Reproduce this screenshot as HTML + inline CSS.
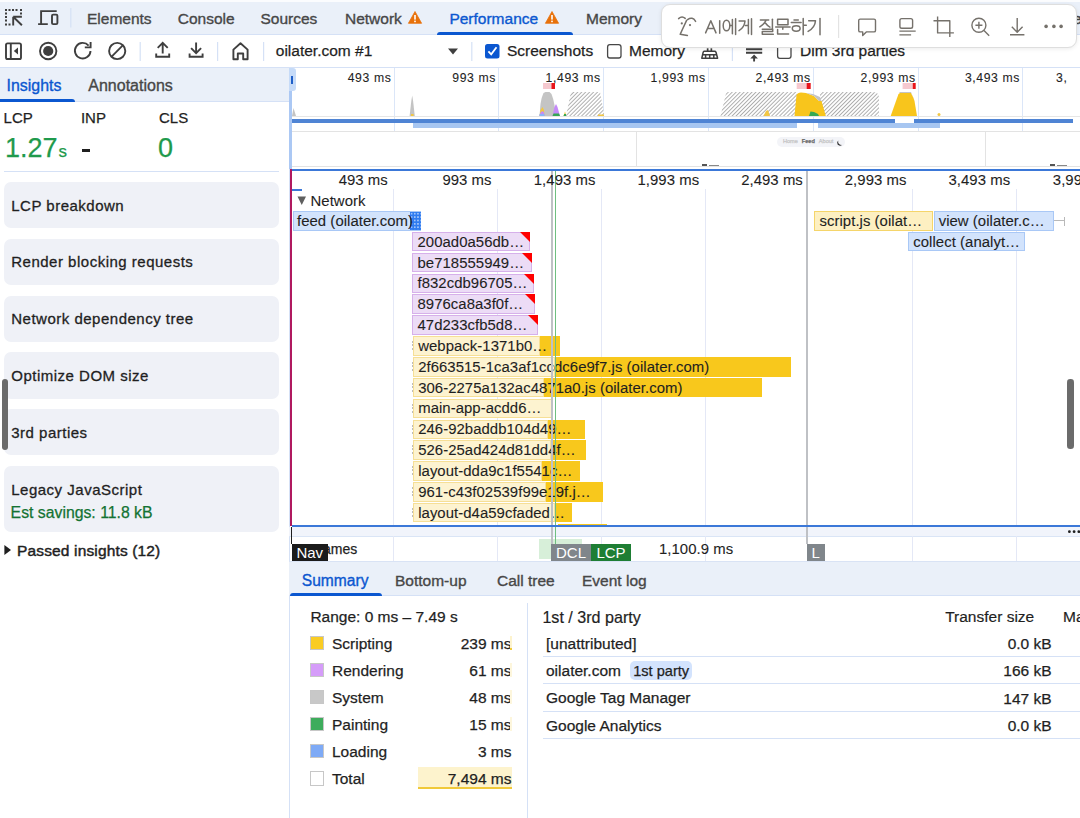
<!DOCTYPE html>
<html><head><meta charset="utf-8">
<style>
*{box-sizing:border-box}
html,body{margin:0;padding:0}
body{width:1080px;height:818px;overflow:hidden;position:relative;background:#fff;font-family:"Liberation Sans",sans-serif;color:#1f1f1f}
.a{position:absolute}
.t{position:absolute;white-space:nowrap;line-height:1;-webkit-text-stroke-width:0.25px}
svg{position:absolute;overflow:visible}
.card{left:4px;width:274.5px;border-radius:7px;background:#eff1f7;}
.ct{left:11.25px;font-size:15px;letter-spacing:0.5px;color:#1f1f1f;-webkit-text-stroke:0.3px #1f1f1f}
.ovl{top:71.9px;font-size:12.2px;letter-spacing:0.62px;color:#1f1f1f;-webkit-text-stroke-width:0.1px}
.fcl{top:172.7px;font-size:14.9px;letter-spacing:0.05px;color:#1f1f1f;-webkit-text-stroke-width:0.1px}
.fct{font-size:14.9px;letter-spacing:0.05px;color:#1f1f1f;-webkit-text-stroke-width:0.1px}
.bb{background:#d2e3fc;border:1px solid #a9c8f6}
.pb{background:#ecdcf6;border:1px solid #d6b0ea}
.yb{background:#fdf3d0;border:1px solid #f6df96}
.yb2{background:#fdf0c2;border:1px solid #f5d56a}
.yd{background:#f8c81c}
.mk{top:543.8px;height:17px;color:#fff;font-size:15px;line-height:18px;text-align:center}
.sm{font-size:15.5px;color:#1f1f1f}
.sw{left:309.7px;width:14.6px;height:14.6px;border:1px solid #c7c7c7}
.sr{left:312px;width:199.5px;text-align:right}
.tr{left:851.6px;width:200px;text-align:right}
.rl{left:543px;width:537px;height:1.2px;background:#d5e1f6}
</style></head><body>

<!-- ============ TOP TAB BAR ============ -->
<div class="a" style="left:0;top:0;width:1080px;height:35px;background:#eaf0f9;border-bottom:1px solid #d5e1f6"></div>
<div class="a" style="left:0;top:0;width:1080px;height:2px;background:#fbfcfe"></div>
<!-- inspect icon -->
<svg style="left:0;top:0" width="80" height="35">
  <g fill="#3f3f3f">
    <rect x="5" y="9" width="2" height="2"/><rect x="8.5" y="9" width="2" height="2"/><rect x="12" y="9" width="2" height="2"/><rect x="15.5" y="9" width="2" height="2"/><rect x="20" y="9" width="2" height="2"/>
    <rect x="5" y="12.5" width="2" height="2"/><rect x="5" y="16" width="2" height="2"/><rect x="5" y="19.5" width="2" height="2"/><rect x="5" y="23.5" width="2" height="2"/>
    <rect x="8.5" y="23.5" width="2" height="2"/><rect x="20" y="12.5" width="2" height="2"/>
  </g>
  <path d="M21.9 25.3 L13.2 16.8 M13.2 16.8 H21.9 M13.2 16.8 V25.5" stroke="#3f3f3f" stroke-width="1.9" fill="none"/>
  <path d="M41.1 24.1 V11.1 H56.7 M38.1 24.1 H47.8" stroke="#3f3f3f" stroke-width="1.9" fill="none"/>
  <rect x="52" y="14.6" width="5.4" height="9.5" rx="1.2" stroke="#3f3f3f" stroke-width="1.9" fill="none"/>
  <rect x="70.2" y="8" width="1.2" height="19.5" fill="#d5e1f6"/>
</svg>
<div class="t" style="left:87px;top:11.3px;font-size:15.5px;color:#474747;-webkit-text-stroke-width:0.35px">Elements</div>
<div class="t" style="left:177.8px;top:11.3px;font-size:15.5px;color:#474747;-webkit-text-stroke-width:0.35px">Console</div>
<div class="t" style="left:260.5px;top:11.3px;font-size:15.5px;color:#474747;-webkit-text-stroke-width:0.35px">Sources</div>
<div class="t" style="left:345px;top:11.3px;font-size:15.5px;color:#474747;-webkit-text-stroke-width:0.35px">Network</div>
<svg style="left:408px;top:11px" width="14" height="13"><path d="M7 0.5 L13.6 12.3 H0.4 Z" fill="#e8710a" stroke="#e8710a" stroke-width="0.8" stroke-linejoin="round"/><rect x="6.2" y="4" width="1.6" height="4.6" fill="#fff"/><rect x="6.2" y="9.6" width="1.6" height="1.6" fill="#fff"/></svg>
<div class="t" style="left:449.4px;top:11.3px;font-size:15.5px;color:#0b57d0;-webkit-text-stroke-width:0.35px">Performance</div>
<svg style="left:545px;top:11px" width="14" height="13"><path d="M7 0.5 L13.6 12.3 H0.4 Z" fill="#e8710a" stroke="#e8710a" stroke-width="0.8" stroke-linejoin="round"/><rect x="6.2" y="4" width="1.6" height="4.6" fill="#fff"/><rect x="6.2" y="9.6" width="1.6" height="1.6" fill="#fff"/></svg>
<div class="a" style="left:437px;top:32px;width:136px;height:3px;background:#0b57d0;border-radius:3px 3px 0 0"></div>
<div class="t" style="left:586px;top:11.3px;font-size:15.5px;color:#474747;-webkit-text-stroke-width:0.35px">Memory</div>
<div class="t" style="left:1073px;top:11.3px;font-size:15.5px;color:#474747;-webkit-text-stroke-width:0.35px">e</div>

<!-- ============ TOOLBAR ============ -->
<div class="a" style="left:0;top:35px;width:1080px;height:33px;background:#fff;border-bottom:1px solid #d5e1f6"></div>
<svg style="left:0;top:35px" width="1080" height="33">
  <g stroke="#3f3f3f" stroke-width="1.9" fill="none">
    <rect x="6" y="8.4" width="15" height="15.6" rx="1.6"/>
    <path d="M10.8 8.4 V24"/>
  </g>
  <path d="M18 12.6 V19.6 L13.8 16.1 Z" fill="#3f3f3f"/>
  <circle cx="48.2" cy="16" r="8.2" stroke="#3f3f3f" stroke-width="1.9" fill="none"/>
  <circle cx="48.2" cy="16" r="5.1" fill="#3f3f3f"/>
  <path d="M90.5 16 A7.8 7.8 0 1 1 88.6 10.6" stroke="#3f3f3f" stroke-width="1.9" fill="none"/>
  <path d="M84.8 12.4 H90.6 V7" stroke="#3f3f3f" stroke-width="1.9" fill="none"/>
  <circle cx="117.2" cy="16" r="8.1" stroke="#3f3f3f" stroke-width="1.9" fill="none"/>
  <path d="M111.4 21.8 L123 10.2" stroke="#3f3f3f" stroke-width="1.9"/>
  <rect x="139.6" y="7" width="1.2" height="19" fill="#d5e1f6"/>
  <path d="M162.7 18.5 V8 M157.7 12.8 L162.7 7.8 L167.7 12.8 M156.2 18.6 V21.8 H169.2 V18.6" stroke="#3f3f3f" stroke-width="1.9" fill="none"/>
  <path d="M196.1 7.5 V18 M191.1 13.2 L196.1 18.2 L201.1 13.2 M189.6 18.6 V21.8 H202.6 V18.6" stroke="#3f3f3f" stroke-width="1.9" fill="none"/>
  <rect x="217" y="7" width="1.2" height="19" fill="#d5e1f6"/>
  <path d="M233.4 24.2 V14.6 L240.5 8.2 L247.6 14.6 V24.2 H243.2 V18.5 H237.8 V24.2 Z" stroke="#3f3f3f" stroke-width="1.9" fill="none" stroke-linejoin="round"/>
  <rect x="263" y="7" width="1.2" height="19" fill="#d5e1f6"/>
  <path d="M448 13.5 H458 L453 19.5 Z" fill="#3f3f3f"/>
  <rect x="471.2" y="7" width="1.2" height="19" fill="#d5e1f6"/>
  <rect x="485" y="9" width="14.5" height="14.5" rx="2.5" fill="#0b57d0"/>
  <path d="M488.4 16.3 L491.2 19.3 L496.5 12.2" stroke="#fff" stroke-width="1.8" fill="none"/>
  <rect x="607.6" y="9.6" width="13.4" height="13.4" rx="2.3" stroke="#474747" stroke-width="1.3" fill="#fff"/>
  <rect x="731.8" y="7" width="1.2" height="19" fill="#d5e1f6"/>
  <rect x="777.6" y="10" width="13.4" height="13.4" rx="2.3" stroke="#474747" stroke-width="1.3" fill="#fff"/>
</svg>
<div class="t" style="left:275.8px;top:42.6px;font-size:15.5px;color:#1f1f1f">oilater.com #1</div>
<div class="t" style="left:507px;top:43px;font-size:15.5px;color:#1f1f1f">Screenshots</div>
<div class="t" style="left:629px;top:43px;font-size:15.5px;color:#1f1f1f">Memory</div>
<div class="t" style="left:800px;top:43px;font-size:15.5px;color:#1f1f1f">Dim 3rd parties</div>


<!-- toolbar items under popup -->
<svg style="left:0;top:0" width="1080" height="68">
  <g stroke="#3f3f3f" stroke-width="1.5" fill="none" stroke-linejoin="round">
    <path d="M704 51.2 H714.6 Q715.6 51.2 716 52.2 L717.6 58.2 H701.8 L703.2 52.2 Q703.5 51.2 704 51.2 Z"/>
    <path d="M702.8 54.8 H716.6 M705.6 54.8 V58.2 M709.7 54.8 V58.2 M713.8 54.8 V58.2"/>
  </g>
  <rect x="706.8" y="48.3" width="1.7" height="3" fill="#3f3f3f"/><rect x="710.5" y="48.3" width="1.7" height="3" fill="#3f3f3f"/>
  <path d="M746 49.3 H762.2 M746 52.8 H762.2" stroke="#3f3f3f" stroke-width="1.9"/>
  <path d="M754.1 61.5 V56.5" stroke="#3f3f3f" stroke-width="1.9"/>
  <path d="M750.3 58.6 L754.1 54.6 L757.9 58.6 Z" fill="#3f3f3f"/>
</svg>

<!-- ============ AI POPUP ============ -->
<div class="a" style="left:661px;top:4.3px;width:415.7px;height:43.9px;background:#fff;border-radius:9px;border:1px solid #dedede;box-shadow:0 1px 4px rgba(0,0,0,0.08)"></div>
<svg style="left:0;top:0" width="1080" height="60">
  <g stroke="#75716b" stroke-width="1.5" fill="none" stroke-linecap="round" stroke-linejoin="round">
    <!-- AI face icon -->
    <path d="M678.6 18.6 Q682 15.4 685.2 18.4"/>
    <path d="M687.6 19.6 Q692.5 16.2 695.6 21.4"/>
    <path d="M686.6 20.4 L680.2 34.2 L687.4 35.4"/>
    <!-- A I -->
    <path d="M705.6 32.9 L710.8 20.8 L716 32.9 M707.5 28.6 H714.1"/>
    <path d="M719.7 20.7 V33.3"/>
    <!-- 에 -->
    <ellipse cx="726.5" cy="25.5" rx="3.3" ry="5.3"/>
    <path d="M729.9 25.5 H732.4 M732.4 19.4 V33.8 M735.6 18.8 V34.6"/>
    <!-- 게 -->
    <path d="M739.1 21 H745 Q744.4 27.5 739 30.7"/>
    <path d="M745.2 25.5 H748.4 M748.4 19.4 V33.8 M751.5 18.8 V34.6"/>
    <!-- 질 -->
    <path d="M760.4 20.1 H768.7 M766 20.4 Q764 24.5 759.8 26.8 M765.6 23.2 Q767.5 25.8 769.9 27.1"/>
    <path d="M772.4 19.2 V28.7"/>
    <path d="M762.3 29.3 H772.7 V31.4 H762.3 V34.2 H773.3"/>
    <!-- 문 -->
    <rect x="777.6" y="19.2" width="10.4" height="5.5"/>
    <path d="M775.7 27.1 H790.1 M782.8 27.1 V29.3 M777.6 29.6 V33.9 H788.6"/>
    <!-- 하 -->
    <path d="M794 20.1 H798.3 M791.3 22.6 H801.1"/>
    <ellipse cx="796.2" cy="28.5" rx="3.9" ry="2.7"/>
    <path d="M803.2 18.6 V34.8 M803.2 25.3 H806.3"/>
    <!-- 기 -->
    <path d="M808.7 20.7 H815.5 Q815 27.5 808.1 31.4"/>
    <path d="M820 18.6 V34.8"/>
  </g>
  <g fill="#75716b">
    <circle cx="681.8" cy="23.4" r="1.1"/>
    <circle cx="690" cy="25.1" r="1.1"/>
  </g>
  <rect x="838" y="15" width="1.2" height="23" fill="#e3e3e3"/>
  <g stroke="#75716b" stroke-width="1.4" fill="none" stroke-linejoin="round">
    <path d="M860.2 19.1 H874 Q875.5 19.1 875.5 20.6 V30.4 Q875.5 31.9 874 31.9 H866.3 L862.7 35.4 V31.9 H860.2 Q858.7 31.9 858.7 30.4 V20.6 Q858.7 19.1 860.2 19.1 Z"/>
    <rect x="899.9" y="18.6" width="12.7" height="9.7" rx="1.8"/>
    <path d="M899.4 31.1 H915.7 M899.4 34.9 H911.1"/>
    <path d="M937.6 16.6 V32.9 H953.9 M933.5 20.7 H949.8 V37"/>
    <circle cx="978.9" cy="25.3" r="7"/>
    <path d="M975.4 25.3 H982.4 M978.9 21.8 V28.8 M984 30.6 L989.2 35.8"/>
    <path d="M1017.2 18.1 V31.8 M1011.8 26.8 L1017.2 32.2 L1022.6 26.8 M1010 34.8 H1024.4"/>
  </g>
  <g fill="#75716b">
    <circle cx="1046.1" cy="26.4" r="1.8"/><circle cx="1053.9" cy="26.4" r="1.8"/><circle cx="1061.1" cy="26.4" r="1.8"/>
  </g>
</svg>

<!-- ============ LEFT SIDEBAR ============ -->
<div class="a" style="left:0;top:68px;width:289px;height:34px;background:#eaf0f9;border-bottom:1px solid #d5e1f6"></div>
<div class="t" style="left:6.6px;top:77.6px;font-size:15.9px;color:#0b57d0;-webkit-text-stroke-width:0.35px">Insights</div>
<div class="t" style="left:88.3px;top:77.6px;font-size:16px;color:#474747;-webkit-text-stroke-width:0.35px">Annotations</div>
<div class="a" style="left:0;top:98.8px;width:75px;height:2.8px;background:#0b57d0;border-radius:0 3px 0 0"></div>
<div class="a" style="left:288.5px;top:68px;width:1px;height:750px;background:#d5e1f6"></div>


<div class="t" style="left:3.6px;top:110.2px;font-size:15px;color:#1f1f1f">LCP</div>
<div class="t" style="left:80.9px;top:110.2px;font-size:15px;color:#1f1f1f">INP</div>
<div class="t" style="left:159px;top:110.2px;font-size:15px;color:#1f1f1f">CLS</div>
<div class="t" style="left:5px;top:135px;font-size:27px;color:#1f9a4c">1.27<span style="font-size:17px;margin-left:1px">s</span></div>
<div class="a" style="left:82px;top:149px;width:8px;height:2.5px;background:#1f1f1f"></div>
<div class="t" style="left:158px;top:135px;font-size:27px;color:#1f9a4c">0</div>
<div class="a" style="left:4px;top:170.5px;width:274.5px;height:1px;background:#d5e1f6"></div>

<div class="a card" style="top:181.7px;height:46.5px"></div>
<div class="t ct" style="top:197.6px">LCP breakdown</div>
<div class="a card" style="top:238.5px;height:46.5px"></div>
<div class="t ct" style="top:254.4px">Render blocking requests</div>
<div class="a card" style="top:295.5px;height:46.5px"></div>
<div class="t ct" style="top:311.2px">Network dependency tree</div>
<div class="a card" style="top:352px;height:46.5px"></div>
<div class="t ct" style="top:368px">Optimize DOM size</div>
<div class="a card" style="top:408.7px;height:46.5px"></div>
<div class="t ct" style="top:424.8px">3rd parties</div>
<div class="a card" style="top:465.6px;height:66.5px"></div>
<div class="t ct" style="top:481.5px">Legacy JavaScript</div>
<div class="t" style="left:10.6px;top:504.5px;font-size:15.8px;color:#137333;-webkit-text-stroke:0.25px #137333">Est savings: 11.8 kB</div>
<svg style="left:0;top:540px" width="20" height="20"><path d="M4.4 5 L11 10 L4.4 15 Z" fill="#1f1f1f"/></svg>
<div class="t" style="left:17px;top:543px;font-size:15.5px;letter-spacing:0.15px;color:#1f1f1f;-webkit-text-stroke-width:0.45px">Passed insights (12)</div>
<div class="a" style="left:2.3px;top:379.3px;width:6px;height:70.4px;border-radius:3px;background:#6b6b6b"></div>

<!-- ============ OVERVIEW ============ -->
<div class="a" style="left:393.5px;top:68px;width:1px;height:63px;background:#dbe6f8"></div>
<div class="a" style="left:498.1px;top:68px;width:1px;height:63px;background:#dbe6f8"></div>
<div class="a" style="left:602.8px;top:68px;width:1px;height:63px;background:#dbe6f8"></div>
<div class="a" style="left:707.8px;top:68px;width:1px;height:63px;background:#dbe6f8"></div>
<div class="a" style="left:812.8px;top:68px;width:1px;height:63px;background:#dbe6f8"></div>
<div class="a" style="left:917.8px;top:68px;width:1px;height:63px;background:#dbe6f8"></div>
<div class="a" style="left:1022.1px;top:68px;width:1px;height:63px;background:#dbe6f8"></div>
<div class="t ovl" style="left:95.40px;width:296px;text-align:right">493 ms</div>
<div class="t ovl" style="left:200.00px;width:296px;text-align:right">993 ms</div>
<div class="t ovl" style="left:304.70px;width:296px;text-align:right">1,493 ms</div>
<div class="t ovl" style="left:409.70px;width:296px;text-align:right">1,993 ms</div>
<div class="t ovl" style="left:514.70px;width:296px;text-align:right">2,493 ms</div>
<div class="t ovl" style="left:619.70px;width:296px;text-align:right">2,993 ms</div>
<div class="t ovl" style="left:724.00px;width:296px;text-align:right">3,493 ms</div>
<div class="t ovl" style="left:1056px">3,</div>
<div class="a" style="left:292px;top:115.5px;width:788px;height:1px;background:#e6e6e6"></div>
<div class="a" style="left:292px;top:119px;width:603px;height:4px;background:#4f84d4"></div>
<div class="a" style="left:914px;top:119px;width:159px;height:4px;background:#4f84d4"></div>
<div class="a" style="left:413px;top:123px;width:384px;height:5px;background:#a7c6f1"></div>
<div class="a" style="left:818px;top:123px;width:122px;height:5px;background:#a7c6f1"></div>
<div class="a" style="left:292px;top:131px;width:788px;height:1px;background:#e3e3e3"></div>
<div class="a" style="left:636px;top:131px;width:1.2px;height:36px;background:#e3e3e3"></div>
<div class="a" style="left:985px;top:131px;width:1.2px;height:36px;background:#e3e3e3"></div>
<div class="a" style="left:292px;top:166.3px;width:788px;height:1px;background:#e3e3e3"></div>

<svg style="left:0;top:0" width="1080" height="170">
  <defs>
    <pattern id="hatch" patternUnits="userSpaceOnUse" width="2.8" height="2.8" patternTransform="rotate(-45)">
      <rect width="2.8" height="2.8" fill="#fff"/>
      <rect width="2.8" height="0.95" fill="#adadad"/>
    </pattern>
  </defs>
  <path d="M292 116 L293.5 108 L296 116 Z" fill="#c4c4c4"/>
  <path d="M409.6 116 L411.3 101 L412.2 95.5 L413.1 101 L414.8 116 Z" fill="#c4c4c4"/>
  <rect x="411" y="114" width="2.6" height="2" fill="#f2c744"/>
  <!-- blob 1 -->
  <path d="M539.5 116 L540.5 104 Q541.5 97 543.5 93 L545.5 92 L549.5 92 L551.5 94 Q553.5 99 554.5 105 L556 116 Z" fill="#c4c4c4"/>
  <path d="M539.5 116 L540.5 110 L542.5 107 L544 110 L544.5 116 Z" fill="#f2c744"/>
  <path d="M539.5 116 L540.5 112.5 L542.5 111 L544 112.5 L544.5 116 Z" fill="#c58af9"/>
  <path d="M539.5 116 V114 H544.5 V116 Z" fill="#8ab4f8"/>
  <path d="M552.5 116 L554.5 107 L556 104 L557.5 107 L560 116 Z" fill="#c58af9"/>
  <path d="M552.5 116 L553.5 113.5 H559 L560 116 Z" fill="#34a853"/>
  <path d="M563.5 116 L565 111.5 L566.5 116 Z" fill="#f2c744"/>
  <path d="M563.5 116 L564.2 114 H566 L566.5 116 Z" fill="#34a853"/>
  <path d="M566 116 L571 92 H600 L604.5 116 Z" fill="url(#hatch)"/>
  <rect x="598" y="114.5" width="6" height="1.5" fill="#f2c744"/>
  <rect x="543" y="83" width="12" height="6" fill="#f6c9cf"/>
  <rect x="551.5" y="83" width="3.5" height="6" fill="#e8141b"/>
  <!-- hatched 2 -->
  <path d="M720.5 116 L726 93.5 Q726.5 92 728 92 H797 V116 Z" fill="url(#hatch)"/>
  <path d="M763.5 116 L766 111 L768 110 L770 116 Z" fill="#f2c744"/>
  <path d="M820 116 V92 H873 Q879 92 879 98 V116 Z" fill="url(#hatch)"/>
  <path d="M794.5 116 L796.5 95 Q797.5 92.5 801 92.5 L806 93 L814 96 L819 101 L821.5 101 L825.8 116 Z" fill="#f8c51c"/>
  <path d="M806 93 L814 96 L819 101 L821.5 101 L820 97 L813 94 Z" fill="#c4c4c4"/>
  <path d="M809 116 L810.5 111.5 L814 112 L818 114 L819 116 Z" fill="#34a853"/>
  <rect x="796.7" y="83" width="12" height="6" fill="#f6c9cf"/>
  <rect x="806.7" y="83" width="4" height="6" fill="#e8141b"/>
  <!-- yellow blob 3 -->
  <path d="M890.7 116 L896 101 L898.5 94 L900 93 H911 L913.5 98 L914.5 101 L917 116 Z" fill="#f8c51c"/>
  <path d="M900 93 L899 92 H911 L914.5 101 L913.5 98 L911 93 Z" fill="#c4c4c4"/>
  <rect x="902.6" y="83" width="10" height="6" fill="#f6c9cf"/>
  <rect x="912.7" y="83" width="3" height="6" fill="#e8141b"/>
  <circle cx="939" cy="114.5" r="1.5" fill="#f2c744"/>
</svg>


<div class="a" style="left:777.4px;top:137.1px;width:67.7px;height:9.9px;background:#f3f4f8;border-radius:5px"></div>
<div class="t" style="left:782.9px;top:138.6px;font-size:5.6px;color:#c4c4c4">Home</div>
<div class="t" style="left:801.8px;top:138.6px;font-size:5.6px;color:#6a6a6a;font-weight:bold">Feed</div>
<div class="t" style="left:818.8px;top:138.6px;font-size:5.6px;color:#c4c4c4">About</div>
<svg style="left:836.5px;top:139.5px" width="6" height="6"><path d="M1.2 0.5 Q0.5 4.8 5 5 Q2.5 6.5 0.6 4.5 Q-0.5 2 1.2 0.5 Z" fill="#2a2a2a"/></svg>
<div class="a" style="left:702px;top:164px;width:5px;height:2px;background:#555"></div>
<div class="a" style="left:709px;top:164.6px;width:10px;height:1.6px;background:#888"></div>
<div class="a" style="left:1050px;top:164px;width:5px;height:2px;background:#555"></div>
<div class="a" style="left:1057px;top:164.6px;width:10px;height:1.6px;background:#888"></div>

<!-- left handle -->
<div class="a" style="left:289.3px;top:68px;width:2.8px;height:101px;background:#abc8f4"></div>
<div class="a" style="left:289.3px;top:68px;width:6.4px;height:23px;background:#c6dbf8;border-radius:0 3px 3px 0"></div>
<div class="a" style="left:291px;top:75.7px;width:1.6px;height:8px;background:#1f5fc8"></div>

<!-- ============ FLAME CHART ============ -->
<div class="a" style="left:292px;top:169px;width:788px;height:2px;background:#3b78d8"></div>
<div class="a" style="left:393.25px;top:189px;width:1px;height:337px;background:#e4e8f6"></div>
<div class="a" style="left:497.00px;top:189px;width:1px;height:337px;background:#e4e8f6"></div>
<div class="a" style="left:600.90px;top:189px;width:1px;height:337px;background:#e4e8f6"></div>
<div class="a" style="left:704.60px;top:189px;width:1px;height:337px;background:#e4e8f6"></div>

<div class="a" style="left:911.90px;top:189px;width:1px;height:337px;background:#e4e8f6"></div>
<div class="a" style="left:1015.60px;top:189px;width:1px;height:337px;background:#e4e8f6"></div>
<div class="a" style="left:292px;top:188.8px;width:10px;height:2px;background:#3b78d8"></div>
<svg style="left:297px;top:196px" width="10" height="10"><path d="M0.5 0.5 H9 L4.75 9 Z" fill="#5f5f5f"/></svg>
<div class="t fct" style="left:310.5px;top:193.8px">Network</div>
<div class="a bb" style="left:292.5px;top:211.0px;width:128.5px;height:19.6px"></div>
<div class="a" style="left:410px;top:211.5px;width:11px;height:18.6px;background:#2f7cf0;background-image:radial-gradient(#a9c8fa 0.55px, transparent 0.75px);background-size:3.2px 3.4px"></div>
<div class="t fct" style="left:297.0px;top:213.85px">feed (oilater.com)</div>
<div class="a pb" style="left:412.0px;top:231.8px;width:118.0px;height:19.6px"></div>
<svg style="left:520.0px;top:231.8px" width="10" height="10"><path d="M0 0 H10 V10 Z" fill="#ff0000"/></svg>
<div class="t fct" style="left:417.5px;top:234.65px">200ad0a56db…</div>
<div class="a pb" style="left:412.0px;top:252.7px;width:119.7px;height:19.6px"></div>
<svg style="left:521.7px;top:252.7px" width="10" height="10"><path d="M0 0 H10 V10 Z" fill="#ff0000"/></svg>
<div class="t fct" style="left:417.5px;top:255.55px">be718555949…</div>
<div class="a pb" style="left:412.0px;top:273.6px;width:121.8px;height:19.6px"></div>
<svg style="left:523.8px;top:273.6px" width="10" height="10"><path d="M0 0 H10 V10 Z" fill="#ff0000"/></svg>
<div class="t fct" style="left:417.5px;top:276.45px">f832cdb96705…</div>
<div class="a pb" style="left:412.0px;top:294.4px;width:123.0px;height:19.6px"></div>
<svg style="left:525.0px;top:294.4px" width="10" height="10"><path d="M0 0 H10 V10 Z" fill="#ff0000"/></svg>
<div class="t fct" style="left:417.5px;top:297.25px">8976ca8a3f0f…</div>
<div class="a pb" style="left:412.0px;top:315.2px;width:125.5px;height:19.6px"></div>
<svg style="left:527.5px;top:315.2px" width="10" height="10"><path d="M0 0 H10 V10 Z" fill="#ff0000"/></svg>
<div class="t fct" style="left:417.5px;top:318.15px">47d233cfb5d8…</div>
<div class="a yb" style="left:413.0px;top:336.1px;width:127.4px;height:19.6px"></div>
<div class="a yd" style="left:540.4px;top:336.1px;width:19.8px;height:19.6px"></div>
<div class="t fct" style="left:418.2px;top:338.95px">webpack-1371b0…</div>
<div class="a" style="left:411.8px;top:341.1px;width:1px;height:10px;background:repeating-linear-gradient(#bdbdbd 0 2px,transparent 2px 3.5px)"></div>
<div class="a yb" style="left:413.0px;top:357.0px;width:141.7px;height:19.6px"></div>
<div class="a yd" style="left:554.7px;top:357.0px;width:236.3px;height:19.6px"></div>
<div class="t fct" style="left:418.2px;top:359.85px">2f663515-1ca3af1ccdc6e9f7.js (oilater.com)</div>
<div class="a" style="left:411.8px;top:362.0px;width:1px;height:10px;background:repeating-linear-gradient(#bdbdbd 0 2px,transparent 2px 3.5px)"></div>
<div class="a yb" style="left:413.0px;top:377.8px;width:131.0px;height:19.6px"></div>
<div class="a yd" style="left:544.0px;top:377.8px;width:217.5px;height:19.6px"></div>
<div class="t fct" style="left:418.2px;top:380.65px">306-2275a132ac4871a0.js (oilater.com)</div>
<div class="a" style="left:411.8px;top:382.8px;width:1px;height:10px;background:repeating-linear-gradient(#bdbdbd 0 2px,transparent 2px 3.5px)"></div>
<div class="a yb" style="left:413.0px;top:398.6px;width:138.6px;height:19.6px"></div>
<div class="t fct" style="left:418.2px;top:401.45px">main-app-acdd6…</div>
<div class="a" style="left:411.8px;top:403.6px;width:1px;height:10px;background:repeating-linear-gradient(#bdbdbd 0 2px,transparent 2px 3.5px)"></div>
<div class="a yb" style="left:413.0px;top:419.5px;width:134.6px;height:19.6px"></div>
<div class="a yd" style="left:547.6px;top:419.5px;width:37.0px;height:19.6px"></div>
<div class="t fct" style="left:418.2px;top:422.35px">246-92baddb104d49…</div>
<div class="a" style="left:411.8px;top:424.5px;width:1px;height:10px;background:repeating-linear-gradient(#bdbdbd 0 2px,transparent 2px 3.5px)"></div>
<div class="a yb" style="left:413.0px;top:440.4px;width:138.2px;height:19.6px"></div>
<div class="a yd" style="left:551.2px;top:440.4px;width:34.7px;height:19.6px"></div>
<div class="t fct" style="left:418.2px;top:443.25px">526-25ad424d81dd4f…</div>
<div class="a" style="left:411.8px;top:445.4px;width:1px;height:10px;background:repeating-linear-gradient(#bdbdbd 0 2px,transparent 2px 3.5px)"></div>
<div class="a yb" style="left:413.0px;top:461.2px;width:128.9px;height:19.6px"></div>
<div class="a yd" style="left:541.9px;top:461.2px;width:37.8px;height:19.6px"></div>
<div class="t fct" style="left:418.2px;top:464.05px">layout-dda9c1f5541c…</div>
<div class="a" style="left:411.8px;top:466.2px;width:1px;height:10px;background:repeating-linear-gradient(#bdbdbd 0 2px,transparent 2px 3.5px)"></div>
<div class="a yb" style="left:413.0px;top:482.1px;width:132.5px;height:19.6px"></div>
<div class="a yd" style="left:545.5px;top:482.1px;width:57.5px;height:19.6px"></div>
<div class="t fct" style="left:418.2px;top:484.95px">961-c43f02539f99e19f.j…</div>
<div class="a" style="left:411.8px;top:487.1px;width:1px;height:10px;background:repeating-linear-gradient(#bdbdbd 0 2px,transparent 2px 3.5px)"></div>
<div class="a yb" style="left:413.0px;top:502.9px;width:141.7px;height:19.6px"></div>
<div class="a yd" style="left:554.7px;top:502.9px;width:17.7px;height:19.6px"></div>
<div class="t fct" style="left:418.2px;top:505.75px">layout-d4a59cfaded…</div>
<div class="a" style="left:411.8px;top:507.9px;width:1px;height:10px;background:repeating-linear-gradient(#bdbdbd 0 2px,transparent 2px 3.5px)"></div>
<div class="a yd" style="left:557.7px;top:523.8px;width:49.3px;height:1.5px"></div>

<div class="a yb2" style="left:814.3px;top:211.0px;width:119.2px;height:19.6px"></div>
<div class="t fct" style="left:819.5px;top:213.85px">script.js (oilat…</div>
<div class="a bb" style="left:933.5px;top:211.0px;width:120.5px;height:19.6px"></div>
<div class="a" style="left:1054px;top:220.3px;width:10.5px;height:1px;background:#b9b9b9"></div>
<div class="a" style="left:1064px;top:216.5px;width:1px;height:9px;background:#b9b9b9"></div>
<div class="t fct" style="left:938.7px;top:213.85px">view (oilater.c…</div>
<div class="a bb" style="left:908.4px;top:231.8px;width:116.6px;height:19.6px"></div>
<div class="t fct" style="left:913.3px;top:234.65px">collect (analyt…</div>
<div class="a" style="left:551.2px;top:171px;width:1.5px;height:373px;background:#bfc1c5"></div>
<div class="a" style="left:555px;top:171px;width:1.2px;height:373px;background:#6fbf80"></div>
<div class="a" style="left:806px;top:171px;width:1.5px;height:373px;background:#bfc1c5"></div>
<div class="t fcl" style="left:87.80px;width:300px;text-align:right">493 ms</div>
<div class="t fcl" style="left:191.55px;width:300px;text-align:right">993 ms</div>
<div class="t fcl" style="left:295.45px;width:300px;text-align:right">1,493 ms</div>
<div class="t fcl" style="left:399.15px;width:300px;text-align:right">1,993 ms</div>
<div class="t fcl" style="left:502.85px;width:300px;text-align:right">2,493 ms</div>
<div class="t fcl" style="left:606.45px;width:300px;text-align:right">2,993 ms</div>
<div class="t fcl" style="left:710.15px;width:300px;text-align:right">3,493 ms</div>
<div class="t fcl" style="left:1052.8px">3,993 ms</div>
<div class="a" style="left:289.6px;top:169px;width:2.4px;height:357px;background:#b0195f"></div>
<div class="a" style="left:292px;top:525px;width:788px;height:2px;background:#3b78d8"></div>
<div class="a" style="left:289px;top:527px;width:791px;height:9.5px;background:#f1f4fb;border-bottom:1px solid #dae5f6"></div>
<svg style="left:1060px;top:525px" width="20" height="12"><circle cx="9.4" cy="6.7" r="1.4" fill="#1f1f1f"/><circle cx="14.1" cy="6.7" r="1.4" fill="#1f1f1f"/><circle cx="18.8" cy="6.7" r="1.4" fill="#1f1f1f"/></svg>
<div class="a" style="left:1067px;top:379px;width:6.5px;height:70px;border-radius:3.25px;background:#6b6b6b"></div>
<div class="a" style="left:393.25px;top:536px;width:1px;height:25px;background:#e4e8f6"></div>
<div class="a" style="left:497.00px;top:536px;width:1px;height:25px;background:#e4e8f6"></div>
<div class="a" style="left:600.90px;top:536px;width:1px;height:25px;background:#e4e8f6"></div>
<div class="a" style="left:704.60px;top:536px;width:1px;height:25px;background:#e4e8f6"></div>

<div class="a" style="left:911.90px;top:536px;width:1px;height:25px;background:#e4e8f6"></div>
<div class="a" style="left:1015.60px;top:536px;width:1px;height:25px;background:#e4e8f6"></div>
<div class="a" style="left:289px;top:561px;width:791px;height:1px;background:#d9e3f5"></div>
<div class="t" style="left:309.8px;top:541.6px;font-size:14px;color:#1f1f1f">Frames</div>
<div class="a" style="left:291px;top:527px;width:1.2px;height:17px;background:#1f1f1f"></div>
<div class="a mk" style="left:291.5px;width:36.5px;background:#1b1b1b">Nav</div>
<div class="a" style="left:539.3px;top:538.7px;width:42.7px;height:20.7px;background:#d7efd9"></div>
<div class="a" style="left:551.2px;top:527px;width:1.5px;height:17px;background:#bfc1c5"></div>
<div class="a" style="left:555px;top:527px;width:1.2px;height:17px;background:#6fbf80"></div>
<div class="a" style="left:806px;top:527px;width:1.5px;height:17px;background:#bfc1c5"></div>
<div class="a mk" style="left:551px;width:40px;background:#80868b">DCL</div>
<div class="a mk" style="left:591px;width:40px;background:#1e7e34">LCP</div>
<div class="a mk" style="left:806.8px;width:17.8px;background:#80868b">L</div>
<div class="t fct" style="left:659px;top:542.4px">1,100.9 ms</div>

<!-- ============ BOTTOM PANEL ============ -->
<div class="a" style="left:289px;top:562px;width:791px;height:34px;background:#eaf0f9;border-bottom:1px solid #d5e1f6"></div>
<div class="t" style="left:301.8px;top:572.9px;font-size:15.6px;color:#0b57d0;-webkit-text-stroke-width:0.35px">Summary</div>
<div class="t" style="left:395px;top:572.9px;font-size:15.5px;color:#474747;-webkit-text-stroke-width:0.35px">Bottom-up</div>
<div class="t" style="left:497px;top:572.9px;font-size:15.5px;color:#474747;-webkit-text-stroke-width:0.35px">Call tree</div>
<div class="t" style="left:582px;top:572.9px;font-size:15.5px;color:#474747;-webkit-text-stroke-width:0.35px">Event log</div>
<div class="a" style="left:289.6px;top:592.7px;width:92.4px;height:3px;background:#0b57d0;border-radius:3px 3px 0 0"></div>

<div class="t sm" style="left:310.4px;top:608.7px">Range: 0 ms – 7.49 s</div>
<div class="a sw" style="top:635.5px;background:#f9cc24"></div>
<div class="t sm" style="left:332px;top:635.5px">Scripting</div>
<div class="t sm sr" style="top:635.5px">239 ms</div>
<div class="a sw" style="top:662.6px;background:#d59cf9"></div>
<div class="t sm" style="left:332px;top:662.5px">Rendering</div>
<div class="t sm sr" style="top:662.5px">61 ms</div>
<div class="a sw" style="top:689.7px;background:#c8c8c8"></div>
<div class="t sm" style="left:332px;top:689.5px">System</div>
<div class="t sm sr" style="top:689.5px">48 ms</div>
<div class="a sw" style="top:716.8px;background:#3eac5c"></div>
<div class="t sm" style="left:332px;top:716.5px">Painting</div>
<div class="t sm sr" style="top:716.5px">15 ms</div>
<div class="a sw" style="top:743.9px;background:#7eaaf6"></div>
<div class="t sm" style="left:332px;top:743.5px">Loading</div>
<div class="t sm sr" style="top:743.5px">3 ms</div>
<div class="a sw" style="top:771px;background:#fff"></div>
<div class="t sm" style="left:332px;top:770.5px">Total</div>
<div class="a" style="left:418px;top:767px;width:94px;height:22px;background:#fdf3cd;border-bottom:2px solid #f0c93a"></div>
<div class="t sm sr" style="top:770.5px">7,494 ms</div>
<div class="a" style="left:510.3px;top:636px;width:2px;height:14px;background:#fdf3cd"></div>
<div class="a" style="left:510.3px;top:648px;width:2px;height:2px;background:#f0c93a"></div>
<div class="a" style="left:510.3px;top:663px;width:2px;height:14px;background:#fdf6dc"></div>
<div class="a" style="left:510.3px;top:690px;width:2px;height:14px;background:#fdf6dc"></div>
<div class="a" style="left:510.3px;top:717px;width:2px;height:14px;background:#fdf6dc"></div>
<div class="a" style="left:526.8px;top:603px;width:1.2px;height:215px;background:#d5e1f6"></div>

<div class="t sm" style="left:542.4px;top:609.2px;font-size:16.1px;-webkit-text-stroke:0.2px #1f1f1f">1st / 3rd party</div>
<div class="t sm" style="left:945.2px;top:608.7px;-webkit-text-stroke:0.2px #1f1f1f">Transfer size</div>
<div class="t sm" style="left:1063px;top:608.7px;-webkit-text-stroke:0.2px #1f1f1f">Ma</div>
<div class="t sm" style="left:546px;top:636px">[unattributed]</div>
<div class="t sm tr" style="top:636px">0.0 kB</div>
<div class="a rl" style="top:656px"></div>
<div class="t sm" style="left:546px;top:663.2px">oilater.com</div>
<div class="a" style="left:629.5px;top:661.2px;width:62px;height:19.3px;background:#d3e3fd;border-radius:5px"></div>
<div class="t sm" style="left:633.2px;top:663.8px;font-size:14.6px">1st party</div>
<div class="t sm tr" style="top:663.2px">166 kB</div>
<div class="a rl" style="top:683.2px"></div>
<div class="t sm" style="left:546px;top:689.5px">Google Tag Manager</div>
<div class="t sm tr" style="top:690.5px">147 kB</div>
<div class="a rl" style="top:710.5px"></div>
<div class="t sm" style="left:546px;top:717.7px">Google Analytics</div>
<div class="t sm tr" style="top:717.7px">0.0 kB</div>
<div class="a rl" style="top:737.7px"></div>

</body></html>
